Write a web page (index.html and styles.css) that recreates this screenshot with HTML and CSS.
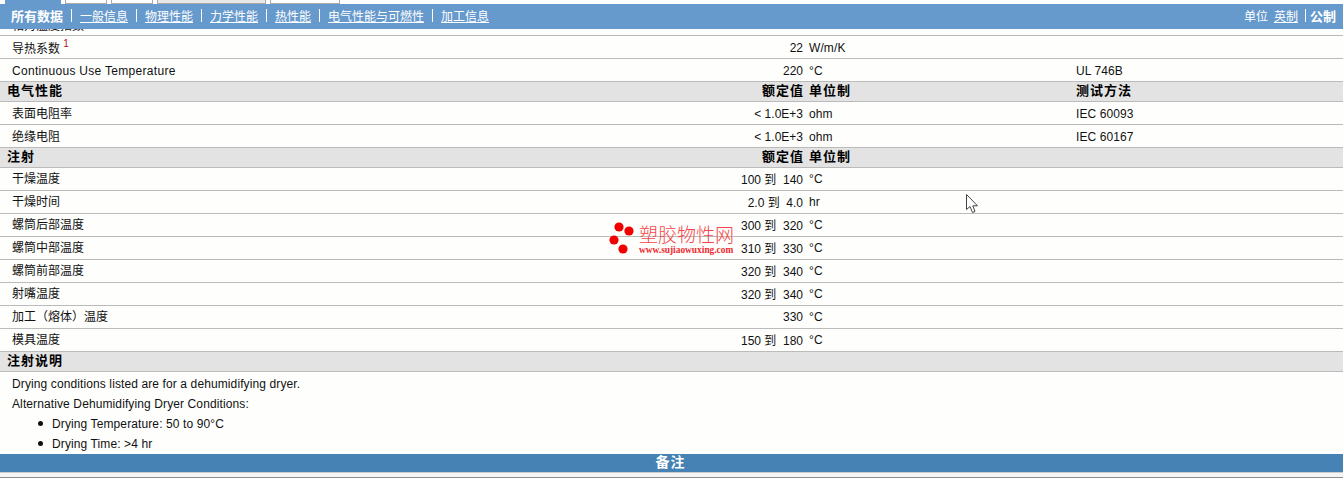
FILE: index.html
```html
<!DOCTYPE html>
<html lang="zh">
<head>
<meta charset="utf-8">
<title>所有数据</title>
<link rel="stylesheet" href="styles.css">
</head>
<body>
<div class="page">
  <div class="tabs">
    <span class="tab tab-active"></span>
    <span class="tab tab-a"></span>
    <span class="tab tab-b"></span>
    <span class="tab tab-c"></span>
    <span class="tab tab-d"></span>
  </div>
  <nav class="nav">
    <div class="nav-links">
      <b class="nav-current">所有数据</b><i class="sep"></i><a href="#">一般信息</a><i class="sep"></i><a href="#">物理性能</a><i class="sep"></i><a href="#">力学性能</a><i class="sep"></i><a href="#">热性能</a><i class="sep"></i><a href="#">电气性能与可燃性</a><i class="sep"></i><a href="#">加工信息</a>
    </div>
    <div class="nav-units">
      <span>单位</span><a href="#">英制</a><i class="sep sep-unit"></i><b>公制</b>
    </div>
  </nav>
  <div class="clip-row"><span>相对温度指数</span></div>
  <div class="row"><span class="label label-noted">导热系数 <sup class="note-ref">1</sup></span><span class="val">22</span><span class="unit">W/m/K</span><span></span></div>
  <div class="row"><span class="label label-latin">Continuous Use Temperature</span><span class="val">220</span><span class="unit">°C</span><span class="method">UL 746B</span></div>
  <div class="row head"><span class="label">电气性能</span><span class="val">额定值</span><span class="unit">单位制</span><span class="method">测试方法</span></div>
  <div class="row"><span class="label">表面电阻率</span><span class="val">&lt; 1.0E+3</span><span class="unit">ohm</span><span class="method">IEC 60093</span></div>
  <div class="row"><span class="label">绝缘电阻</span><span class="val">&lt; 1.0E+3</span><span class="unit">ohm</span><span class="method">IEC 60167</span></div>
  <div class="row head"><span class="label">注射</span><span class="val">额定值</span><span class="unit">单位制</span><span></span></div>
  <div class="row row-range"><span class="label">干燥温度</span><span class="val">100 到&nbsp; 140</span><span class="unit">°C</span><span></span></div>
  <div class="row row-range"><span class="label">干燥时间</span><span class="val">2.0 到&nbsp; 4.0</span><span class="unit">hr</span><span></span></div>
  <div class="row row-range"><span class="label">螺筒后部温度</span><span class="val">300 到&nbsp; 320</span><span class="unit">°C</span><span></span></div>
  <div class="row row-range"><span class="label">螺筒中部温度</span><span class="val">310 到&nbsp; 330</span><span class="unit">°C</span><span></span></div>
  <div class="row row-range"><span class="label">螺筒前部温度</span><span class="val">320 到&nbsp; 340</span><span class="unit">°C</span><span></span></div>
  <div class="row row-range"><span class="label">射嘴温度</span><span class="val">320 到&nbsp; 340</span><span class="unit">°C</span><span></span></div>
  <div class="row row-range"><span class="label">加工（熔体）温度</span><span class="val val-single">330</span><span class="unit">°C</span><span></span></div>
  <div class="row row-range"><span class="label">模具温度</span><span class="val">150 到&nbsp; 180</span><span class="unit">°C</span><span></span></div>
  <div class="row head"><span class="label">注射说明</span><span></span><span></span><span></span></div>
  <div class="notes">
    <p>Drying conditions listed are for a dehumidifying dryer.</p>
    <p>Alternative Dehumidifying Dryer Conditions:</p>
    <ul>
      <li>Drying Temperature: 50 to 90°C</li>
      <li>Drying Time: &gt;4 hr</li>
    </ul>
  </div>
  <div class="band">备注</div>
  <div class="foot"></div>

  <div class="watermark">
    <svg class="wm-dots" width="30" height="36" viewBox="0 0 30 36" aria-hidden="true">
      <circle cx="11" cy="5" r="4.6"/><circle cx="21" cy="9" r="4.6"/><circle cx="6" cy="18" r="4.6"/><circle cx="15" cy="27" r="4.6"/>
    </svg>
    <div class="wm-text">
      <div class="wm-cn">塑胶物性网</div>
      <div class="wm-url">www.sujiaowuxing.com</div>
    </div>
  </div>
  <svg class="cursor" width="13" height="20" viewBox="0 0 13 20" aria-hidden="true">
    <path d="M.5.5V15.5L4 12.5 6.5 18.5 9 17.5 6.8 11.8H11.5Z" fill="#fff" stroke="#444" stroke-width="1"/>
  </svg>
</div>
</body>
</html>
```
FILE: styles.css
```css
* { box-sizing: border-box; }
html, body { margin: 0; padding: 0; background: #fefffd; }
body {
  font-family: "Liberation Sans", "Noto Sans CJK SC", sans-serif;
  font-size: 12px;
  color: #111;
}
.page {
  position: relative;
  width: 1343px;
  height: 478px;
  overflow: hidden;
}
.tabs {
  display: flex;
  height: 4px;
  padding-left: 5px;
}
.tab {
  display: block;
  height: 4px;
  border: 1px solid #aaa;
  border-top: 0;
  background: #fff;
}
.tab-active { width: 56px; background: #6699cc; border-color: #6699cc; }
.tab-a { width: 42px; margin-left: 4px; }
.tab-b { width: 42px; margin-left: 4px; }
.tab-c { width: 109px; margin-left: 4px; background: #e8e8e8; }
.tab-d { width: 70px; margin-left: 4px; }

.nav {
  display: flex;
  justify-content: space-between;
  align-items: center;
  height: 25px;
  padding: 0 7px 2px 11px;
  background: #6699cc;
  color: #fff;
}
.nav a { color: #fff; text-decoration: underline; }
.nav-links, .nav-units { display: flex; align-items: center; }
.nav-current { font-size: 13px; }
.sep {
  display: block;
  width: 1px;
  height: 13px;
  margin: 0 8px;
  background: #fff;
}
.nav-units a { margin-left: 6px; }
.sep-unit { margin: 0 4px 0 7px; }
.nav-units b { font-size: 13px; }

.clip-row {
  display: flex;
  align-items: flex-end;
  height: 7px;
  padding-left: 12px;
  overflow: hidden;
  border-bottom: 1px solid #bbb;
  line-height: 17px;
}
.clip-row span { flex: none; }

.row {
  display: grid;
  grid-template-columns: 191px 600px 273px 1fr;
  align-items: center;
  height: 23px;
  padding-left: 12px;
  border-bottom: 1px solid #bbb;
}
.label { white-space: nowrap; padding-bottom: 2px; }
.label-noted { padding-bottom: 0; }
.label-latin { padding: 2px 0 0; letter-spacing: .3px; }
.val { text-align: right; white-space: nowrap; padding-top: 2px; }
.unit, .method { padding-top: 2px; letter-spacing: .1px; }
.unit { padding-left: 6px; }
.row-range .label { padding-bottom: 4px; }
.row-range .val { padding: 0 0 2px; }
.row-range .val-single { padding: 0; }
.row-range .unit { padding-top: 0; }
.note-ref {
  position: relative;
  top: -1px;
  font-size: 10px;
  line-height: 0;
  vertical-align: super;
  color: #b00c30;
}
.head {
  height: 20px;
  padding-left: 7px;
  grid-template-columns: 196px 600px 273px 1fr;
  background: #e3e3e3;
  font-size: 13px;
  font-weight: 700;
  line-height: 14px;
  letter-spacing: 1px;
  color: #000;
}
.head .label, .head .val, .head .unit, .head .method { padding-top: 0; padding-bottom: 1px; letter-spacing: 1px; }
.head .val { margin-right: -1px; }
.notes {
  padding: 2px 0 0 12px;
  height: 82px;
  line-height: 20px;
  letter-spacing: .11px;
}
.notes p { margin: 0; }
.notes ul { margin: 0; padding: 0 0 0 40px; list-style: none; }
.notes li { position: relative; }
.notes li::before {
  content: "";
  position: absolute;
  left: -14px;
  top: 7px;
  width: 5px;
  height: 5px;
  border-radius: 50%;
  background: #111;
}
.band {
  height: 18px;
  line-height: 16px;
  background: #4682b4;
  color: #fff;
  font-size: 14px;
  font-weight: 700;
  letter-spacing: 1px;
  text-align: center;
  padding-right: 2px;
}
.foot {
  height: 6px;
  border-top: 1px solid #ccc;
  border-bottom: 1px solid #8c8c8c;
  background: #f4f4f4;
}

.watermark {
  position: absolute;
  left: 608px;
  top: 222px;
  display: flex;
  color: #f3454a;
}
.wm-dots { fill: #f00000; flex: none; }
.wm-text { margin-left: 1px; }
.wm-cn {
  font-family: "Noto Sans CJK SC", sans-serif;
  font-size: 19px;
  line-height: 24px;
  font-weight: 300;
  white-space: nowrap;
}
.wm-url {
  font-family: "Liberation Serif", serif;
  font-size: 9.4px;
  font-weight: 700;
  line-height: 8px;
  white-space: nowrap;
  color: #ee2a30;
}
.cursor {
  position: absolute;
  left: 966px;
  top: 194px;
}
```
